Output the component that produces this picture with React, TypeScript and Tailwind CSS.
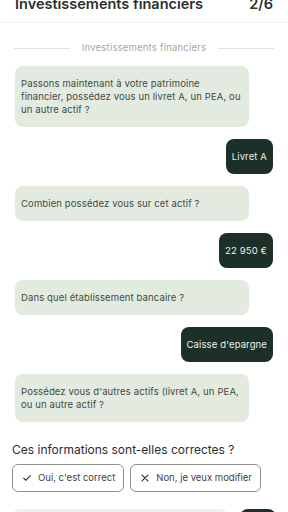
import * as React from "react";

type Msg = { from: "bot" | "user"; text: string };

// line breaks kept as in the mock
const messages: Msg[] = [
  {
    from: "bot",
    text: "Passons maintenant à votre patrimoine\nfinancier, possédez vous un livret A, un PEA, ou\nun autre actif ?",
  },
  { from: "user", text: "Livret A" },
  { from: "bot", text: "Combien possédez vous sur cet actif ?" },
  { from: "user", text: "22 950 €" },
  { from: "bot", text: "Dans quel établissement bancaire ?" },
  { from: "user", text: "Caisse d'epargne" },
  {
    from: "bot",
    text: "Possédez vous d'autres actifs (livret A, un PEA,\nou un autre actif ?",
  },
];

function Bubble({ msg }: { msg: Msg }) {
  if (msg.from === "user") {
    return (
      <div className="flex justify-end">
        <div className="rounded-[8px] bg-[#1c2f29] px-[6px] py-[11px] text-[9.5px] leading-[13px] tracking-[0.12px] text-[#e9efeb]">
          {msg.text}
        </div>
      </div>
    );
  }
  return (
    <div className="w-[234px] whitespace-pre-line rounded-[8px] bg-[#e3eadf] py-[11px] pl-[6px] pr-[2px] text-[9.5px] leading-[13px] tracking-[0.12px] text-[#414b45]">
      {msg.text}
    </div>
  );
}

export default function App() {
  return (
    <div className="relative h-[512px] w-[288px] overflow-hidden bg-white font-['Inter',sans-serif]">
      {/* header, scrolled a bit past the top */}
      <div className="flex h-[23px] items-start justify-between border-b border-[#f3f4f3] px-[15px]">
        <span className="-mt-[5px] text-[14.5px] font-semibold leading-[17px] text-[#2c302e]">
          Investissements financiers
        </span>
        <span className="-mt-[5px] text-[14.5px] font-semibold leading-[17px] text-[#2c302e]">
          2/6
        </span>
      </div>

      <div className="mt-[19px] flex items-center gap-[12px] px-[14px]">
        <div className="h-px flex-1 bg-[#e2e4e2]" />
        <span className="text-[9.5px] leading-[12px] tracking-[0.2px] text-[#a3a7a4]">
          Investissements financiers
        </span>
        <div className="h-px flex-1 bg-[#e2e4e2]" />
      </div>

      <div className="mt-[12px] flex flex-col gap-[12px] px-[15px]">
        {messages.map((m, i) => (
          <Bubble key={i} msg={m} />
        ))}
      </div>

      <div className="mt-[20px] px-[12px]">
        <p className="text-[12px] leading-[16px] text-[#2a2e2c]">
          Ces informations sont-elles correctes ?
        </p>
        <div className="mt-[6px] flex gap-[6px]">
          <button className="flex h-[28px] items-center gap-[6px] rounded-[6px] border border-[#8d918e] pl-[9px] pr-[8px] text-[9.5px] text-[#3c433f]">
            <svg width="10" height="10" viewBox="0 0 24 24" fill="none" stroke="#2a2e2c" strokeWidth="2.6" strokeLinecap="round" strokeLinejoin="round">
              <path d="M4 12.5l5 5L20 6.5" />
            </svg>
            Oui, c'est correct
          </button>
          <button className="flex h-[28px] items-center gap-[6px] rounded-[6px] border border-[#8d918e] pl-[9px] pr-[8px] text-[9.5px] text-[#3c433f]">
            <svg width="10" height="10" viewBox="0 0 24 24" fill="none" stroke="#2a2e2c" strokeWidth="2.8" strokeLinecap="round">
              <path d="M5 5l14 14M19 5L5 19" />
            </svg>
            Non, je veux modifier
          </button>
        </div>
      </div>

      <div className="mt-[17px] flex items-start gap-[12px] px-[12px]">
        <div className="h-[30px] w-[216px] rounded-[8px] bg-[#eef1ed]" />
        <div className="h-[30px] w-[36px] rounded-[8px] bg-[#1c2f29]" />
      </div>
    </div>
  );
}
